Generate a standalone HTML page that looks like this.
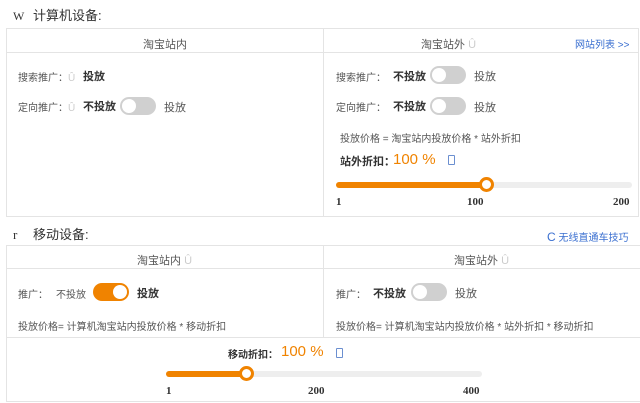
<!DOCTYPE html>
<html><head><meta charset="utf-8"><style>
*{margin:0;padding:0;box-sizing:border-box}
body{width:640px;height:403px;background:#fff;font-family:"Liberation Sans","Noto Sans CJK SC",sans-serif;color:#333;position:relative;overflow:hidden;font-size:11px}
.a{position:absolute;white-space:nowrap}
.box{position:absolute;border:1px solid #e4e4e4}
.ln{position:absolute;background:#e4e4e4}
.t{font-size:13px;color:#333}
.g{color:#555}
.b{font-weight:bold;color:#333}
.sw{position:absolute;width:36px;height:18px;border-radius:9px;background:#d0d0d0}
.sw i{position:absolute;top:2px;left:2px;width:14px;height:14px;border-radius:50%;background:#fff}
.sw.on{background:#f08300}.sw.on i{left:20px}
.o{color:#f08300;font-size:15px}
.ic{color:#ccc}
.sl{position:absolute;height:6px;border-radius:3px;background:#eee}
.sl b{position:absolute;left:0;top:0;height:6px;border-radius:3px;background:#f08300}
.kn{position:absolute;width:15px;height:15px;border-radius:50%;border:3px solid #f08300;background:#fff}
.n{font-family:"Liberation Serif",serif;font-weight:bold;font-size:11px;color:#333}
.ph{position:absolute;width:7px;height:10px;border:1px solid #6b8fd0;border-radius:1px}
</style></head><body>
<div class="a t" style="left:13px;top:9px;font-family:'Liberation Serif',serif;font-size:12px">W</div>
<div class="a t" style="left:33px;top:5px">计算机设备:</div>
<div class="box" style="left:6px;top:28px;width:633px;height:189px"></div>
<div class="ln" style="left:6px;top:52px;width:633px;height:1px"></div>
<div class="ln" style="left:323px;top:28px;width:1px;height:189px"></div>
<div class="a g" style="left:143px;top:36px">淘宝站内</div>
<div class="a g" style="left:421px;top:36px">淘宝站外 <span class="ic">Û</span></div>
<div class="a" style="left:575px;top:36px;color:#3a6fd0;font-size:10px">网站列表 &gt;&gt;</div>
<div class="a g" style="left:18px;top:69px;font-size:10px">搜索推广：<span class="ic">Û</span></div>
<div class="a b" style="left:83px;top:68px">投放</div>
<div class="a g" style="left:18px;top:99px;font-size:10px">定向推广：<span class="ic">Û</span></div>
<div class="a b" style="left:83px;top:98px">不投放</div>
<div class="sw" style="left:120px;top:97px"><i></i></div>
<div class="a g" style="left:164px;top:99px">投放</div>
<div class="a g" style="left:336px;top:69px;font-size:10px">搜索推广：</div>
<div class="a b" style="left:393px;top:68px">不投放</div>
<div class="sw" style="left:430px;top:66px"><i></i></div>
<div class="a g" style="left:474px;top:68px">投放</div>
<div class="a g" style="left:336px;top:99px;font-size:10px">定向推广：</div>
<div class="a b" style="left:393px;top:98px">不投放</div>
<div class="sw" style="left:430px;top:97px"><i></i></div>
<div class="a g" style="left:474px;top:99px">投放</div>
<div class="a g" style="left:340px;top:130px;font-size:10px">投放价格 = 淘宝站内投放价格 * 站外折扣</div>
<div class="a b" style="left:340px;top:153px">站外折扣：</div>
<div class="a o" style="left:393px;top:151px">100 %</div>
<div class="ph" style="left:448px;top:155px"></div>
<div class="sl" style="left:336px;top:182px;width:296px"><b style="width:150px"></b></div>
<div class="kn" style="left:479px;top:177px"></div>
<div class="a n" style="left:336px;top:196px">1</div>
<div class="a n" style="left:467px;top:196px">100</div>
<div class="a n" style="left:613px;top:196px">200</div>

<div class="a t" style="left:13px;top:227px;font-family:'Liberation Serif',serif">r</div>
<div class="a t" style="left:33px;top:224px">移动设备:</div>
<div class="a" style="left:547px;top:229px;color:#3a6fd0;font-size:10px"><span style="font-size:12px">C</span> 无线直通车技巧</div>
<div class="box" style="left:6px;top:245px;width:640px;height:157px"></div>
<div class="ln" style="left:6px;top:268px;width:634px;height:1px"></div>
<div class="ln" style="left:6px;top:337px;width:634px;height:1px"></div>
<div class="ln" style="left:323px;top:245px;width:1px;height:92px"></div>
<div class="a g" style="left:137px;top:252px">淘宝站内 <span class="ic">Û</span></div>
<div class="a g" style="left:454px;top:252px">淘宝站外 <span class="ic">Û</span></div>
<div class="a g" style="left:18px;top:286px;font-size:10px">推广：</div>
<div class="a g" style="left:56px;top:286px;font-size:10px">不投放</div>
<div class="sw on" style="left:93px;top:283px"><i></i></div>
<div class="a b" style="left:137px;top:285px">投放</div>
<div class="a g" style="left:336px;top:286px;font-size:10px">推广：</div>
<div class="a b" style="left:373px;top:285px">不投放</div>
<div class="sw" style="left:411px;top:283px"><i></i></div>
<div class="a g" style="left:455px;top:285px">投放</div>
<div class="a g" style="left:18px;top:318px;font-size:10px">投放价格= 计算机淘宝站内投放价格 * 移动折扣</div>
<div class="a g" style="left:336px;top:318px;font-size:10px">投放价格= 计算机淘宝站内投放价格 * 站外折扣 * 移动折扣</div>
<div class="a b" style="left:228px;top:346px;font-size:10px">移动折扣：</div>
<div class="a o" style="left:281px;top:343px">100 %</div>
<div class="ph" style="left:336px;top:348px"></div>
<div class="sl" style="left:166px;top:371px;width:316px"><b style="width:80px"></b></div>
<div class="kn" style="left:239px;top:366px"></div>
<div class="a n" style="left:166px;top:385px">1</div>
<div class="a n" style="left:308px;top:385px">200</div>
<div class="a n" style="left:463px;top:385px">400</div>
</body></html>
